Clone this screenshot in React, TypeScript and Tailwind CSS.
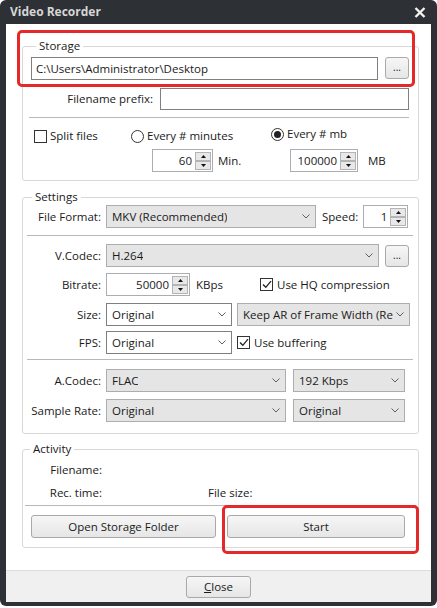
import React from 'react';

function Chevron() {
  return (
    <svg width="8" height="5" viewBox="0 0 8 5" className="shrink-0">
      <path d="M0.5 0.5 L4 4 L7.5 0.5" fill="none" stroke="#5f5f5f" strokeWidth="1" />
    </svg>
  );
}

function Select({ value, w, white }: { value: string; w: string; white?: boolean }) {
  return (
    <div
      className={`${w} h-[23px] flex items-center justify-between pl-[5px] pr-[5px] border overflow-hidden whitespace-nowrap ${
        white ? 'bg-white border-[#7f7f7f]' : 'bg-[#e5e5e5] border-[#adadad]'
      }`}
    >
      <span className="overflow-hidden">{value}</span>
      <Chevron />
    </div>
  );
}

function SpinArrow({ up }: { up?: boolean }) {
  return (
    <div className="flex-1 border border-[#b4b4b4] bg-[#e8e8e8] flex items-center justify-center">
      <svg width="5" height="3" viewBox="0 0 5 3">
        <path d={up ? 'M0 3 L2.5 0 L5 3 Z' : 'M0 0 L2.5 3 L5 0 Z'} fill="#111" />
      </svg>
    </div>
  );
}

function Spin({ value, w }: { value: string; w: string }) {
  return (
    <div className={`${w} h-[23px] border border-[#abadb3] bg-white flex`}>
      <span className="flex-1 text-right pr-[3px] leading-[21px]">{value}</span>
      <div className="w-[17px] flex flex-col pt-[2px] pb-[1px] pr-[1px]">
        <SpinArrow up />
        <SpinArrow />
      </div>
    </div>
  );
}

function Check({ checked }: { checked?: boolean }) {
  return (
    <div className="w-[13px] h-[13px] border border-[#333] bg-white flex items-center justify-center shrink-0">
      {checked && (
        <svg width="10" height="9" viewBox="0 0 10 9">
          <path d="M1 4.5 L3.8 7.3 L9 1.2" fill="none" stroke="#222" strokeWidth="1.3" />
        </svg>
      )}
    </div>
  );
}

function Radio({ checked }: { checked?: boolean }) {
  return (
    <div className="w-[13px] h-[13px] rounded-full border border-[#333] bg-white flex items-center justify-center shrink-0">
      {checked && <div className="w-[7px] h-[7px] rounded-full bg-[#222]" />}
    </div>
  );
}

function Btn({ children, w, h = 'h-[23px]' }: { children: React.ReactNode; w: string; h?: string }) {
  return (
    <div
      className={`${w} ${h} shrink-0 flex items-center justify-center rounded-[3px] border border-[#a9a9a9] bg-gradient-to-b from-[#f6f6f6] to-[#e6e6e6]`}
    >
      {children}
    </div>
  );
}

function Sep({ className = '' }: { className?: string }) {
  return <div className={`h-px bg-[#b8b8b8] ${className}`} />;
}

function Label({ children, w }: { children: React.ReactNode; w: string }) {
  return <span className={`${w} shrink-0 text-right pr-[5px]`}>{children}</span>;
}

export default function App() {
  return (
    <div className="w-[437px] h-[608px] bg-white font-['Open_Sans','Noto_Sans',sans-serif] text-[11.5px] text-[#1a1a1a]">
      <div className="relative h-[606px] bg-[#2d3035] rounded-[6px] px-[6px] pb-[4px] flex flex-col">
        {/* title bar */}
        <div className="h-[24px] flex items-center justify-between pl-[4px] pr-[5px]">
          <span className="font-bold text-[12px] text-[#d6d6d6]">Video Recorder</span>
          <svg width="12" height="11" viewBox="0 0 12 11">
            <path d="M1.5 1 L10.5 10 M10.5 1 L1.5 10" stroke="#f2f2f2" strokeWidth="2.4" />
          </svg>
        </div>

        <div className="flex-1 bg-white flex flex-col">
          <div className="flex-1 pl-[16px] pt-[14px]">
            {/* Storage */}
            <fieldset className="w-[397px] border border-[#d8d8d8] rounded-[3px] pl-[8px] pr-[9px] pt-[3px] pb-[8px]">
              <legend className="ml-[5px] px-[3px] leading-[16px]">Storage</legend>
              <div className="flex gap-[7px]">
                <div className="flex-1 h-[23px] border border-[#7f7f7f] bg-white pl-[4px] leading-[21px]">
                  C:\Users\Administrator\Desktop
                </div>
                <Btn w="w-[24px]" h="h-[22px]">
                  <span className="text-[10px] leading-none -mt-[2px]">...</span>
                </Btn>
              </div>
              <div className="flex items-center mt-[8px]">
                <span className="w-[122px] text-right">Filename prefix:</span>
                <div className="ml-[7px] flex-1 h-[22px] border border-[#7f7f7f] bg-white" />
              </div>
              <Sep className="mt-[7px] -ml-[2px]" />
              <div className="mt-[10px] grid grid-cols-[100px_140px_1fr] h-[16px] items-start">
                <div className="flex items-center h-[16px] pl-[3px] gap-[3px]">
                  <Check />
                  <span>Split files</span>
                </div>
                <div className="flex items-center h-[16px] gap-[3px]">
                  <Radio />
                  <span>Every # minutes</span>
                </div>
                <div className="flex items-center h-[16px] gap-[3px] -mt-[2px]">
                  <Radio checked />
                  <span>Every # mb</span>
                </div>
              </div>
              <div className="mt-[5px] grid grid-cols-[100px_140px_1fr]">
                <div />
                <div className="flex items-center pl-[21px]">
                  <Spin value="60" w="w-[61px]" />
                  <span className="ml-[5px]">Min.</span>
                </div>
                <div className="flex items-center pl-[19px]">
                  <Spin value="100000" w="w-[68px]" />
                  <span className="ml-[10px]">MB</span>
                </div>
              </div>
            </fieldset>

            {/* Settings */}
            <fieldset className="mt-[8px] w-[397px] border border-[#d8d8d8] rounded-[3px] pl-[4px] pr-[5px] pb-[11px]">
              <legend className="ml-[5px] px-[3px] leading-[16px]">Settings</legend>
              <div className="flex items-center">
                <Label w="w-[79px]">File Format:</Label>
                <Select value="MKV (Recommended)" w="w-[210px]" />
                <span className="ml-[6px]">Speed:</span>
                <div className="ml-[5px]">
                  <Spin value="1" w="w-[45px]" />
                </div>
              </div>
              <Sep className="mt-[7px]" />
              <div className="flex items-center mt-[8px]">
                <Label w="w-[79px]">V.Codec:</Label>
                <Select value="H.264" w="w-[273px]" />
                <div className="ml-[6px]">
                  <Btn w="w-[24px]" h="h-[22px]">
                    <span className="text-[10px] leading-none -mt-[2px]">...</span>
                  </Btn>
                </div>
              </div>
              <div className="flex items-center mt-[6px]">
                <Label w="w-[79px]">Bitrate:</Label>
                <Spin value="50000" w="w-[84px]" />
                <span className="w-[70px] pl-[6px]">KBps</span>
                <Check checked />
                <span className="ml-[4px]">Use HQ compression</span>
              </div>
              <div className="flex items-center mt-[7px]">
                <Label w="w-[79px]">Size:</Label>
                <Select value="Original" w="w-[126px]" white />
                <div className="ml-[5px]">
                  <Select value="Keep AR of Frame Width (Re" w="w-[173px]" />
                </div>
              </div>
              <div className="flex items-center mt-[5px]">
                <Label w="w-[79px]">FPS:</Label>
                <Select value="Original" w="w-[126px]" white />
                <div className="ml-[5px] flex items-center gap-[4px]">
                  <Check checked />
                  <span>Use buffering</span>
                </div>
              </div>
              <Sep className="mt-[5px]" />
              <div className="flex items-center mt-[9px]">
                <Label w="w-[79px]">A.Codec:</Label>
                <Select value="FLAC" w="w-[180px]" />
                <div className="ml-[7px]">
                  <Select value="192 Kbps" w="w-[112px]" />
                </div>
              </div>
              <div className="flex items-center mt-[7px]">
                <Label w="w-[79px]">Sample Rate:</Label>
                <Select value="Original" w="w-[180px]" />
                <div className="ml-[7px]">
                  <Select value="Original" w="w-[112px]" />
                </div>
              </div>
            </fieldset>

            {/* Activity */}
            <fieldset className="mt-[7px] w-[397px] border border-[#d8d8d8] rounded-[3px] px-[2px] pt-[5px] pb-[9px]">
              <legend className="ml-[5px] px-[3px] leading-[16px]">Activity</legend>
              <div className="flex leading-[16px]">
                <span className="w-[77px] text-right">Filename:</span>
              </div>
              <div className="flex leading-[16px] mt-[7px]">
                <span className="w-[77px] text-right">Rec. time:</span>
                <span className="ml-[106px]">File size:</span>
              </div>
              <Sep className="mt-[4px]" />
              <div className="flex mt-[9px] pl-[6px] gap-[11px]">
                <Btn w="w-[185px]">Open Storage Folder</Btn>
                <Btn w="w-[178px]">Start</Btn>
              </div>
            </fieldset>
          </div>

          {/* footer */}
          <div className="h-[32px] border-t border-[#dcdcdc] bg-[#f0f0f0] flex justify-center pt-[5px]">
            <Btn w="w-[65px]" h="h-[22px]">
              <span>
                <span className="underline">C</span>lose
              </span>
            </Btn>
          </div>
        </div>

        {/* annotation highlights */}
        <div className="absolute left-[17px] top-[30px] w-[398px] h-[57px] border-[3px] border-[#e5282a] rounded-[5px]" />
        <div className="absolute left-[222px] top-[505px] w-[197px] h-[49px] border-[3px] border-[#e5282a] rounded-[5px]" />
      </div>
    </div>
  );
}
